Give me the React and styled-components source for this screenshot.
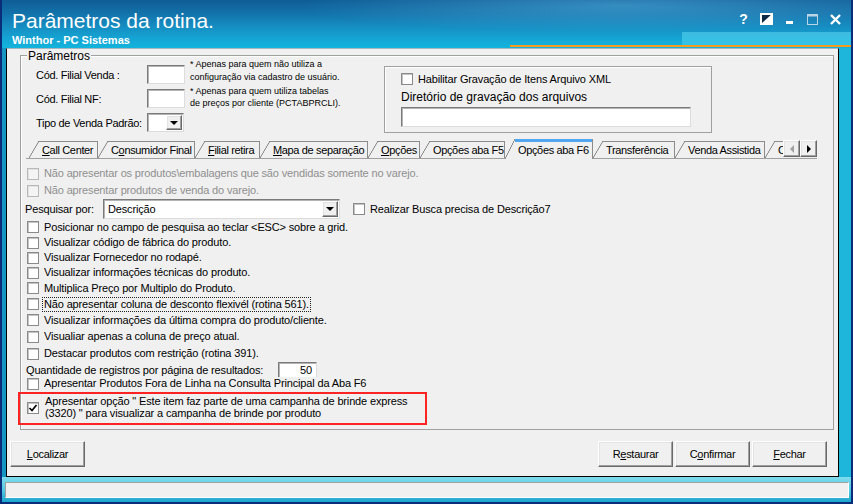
import React from 'react'
import styled, { createGlobalStyle, css } from 'styled-components'

const GlobalStyle = createGlobalStyle`
  * { box-sizing: border-box; }
  html, body { margin: 0; padding: 0; background: #ffffff; }
  body {
    font-family: "Liberation Sans", Arial, sans-serif;
    font-size: 11px;
    letter-spacing: -0.15px;
    color: #000;
  }
`

const sunken = css`
  background: #fff;
  border: 1px solid;
  border-color: #7a7a7a #dcdcdc #dcdcdc #7a7a7a;
  box-shadow: inset 1px 1px 0 #b4b4b4;
`

const raised = css`
  background: #f0f0f0;
  border: 1px solid;
  border-color: #ffffff #696969 #696969 #ffffff;
  box-shadow: inset -1px -1px 0 #a0a0a0, inset 1px 1px 0 #e3e3e3;
`

const Window = styled.div`
  width: 853px;
  height: 504px;
  display: flex;
  flex-direction: column;
  border: 2px solid #0a2d7a;
  border-top: 0;
  background: linear-gradient(90deg, #1596c2 0%, #1aa9d2 50%, #1fb6dc 100%);
  overflow: hidden;
`

const TitleBar = styled.div`
  flex: none;
  height: 48px;
  display: flex;
  justify-content: space-between;
  padding: 10px 4px 0 10px;
  color: #fff;
  background:
    linear-gradient(#f39c1f, #f39c1f) 508px 45px / 345px 2px no-repeat,
    linear-gradient(180deg, rgba(95, 215, 240, 0.55), rgba(60, 200, 235, 0.75)) 680px 32px / 175px 13px no-repeat,
    radial-gradient(ellipse 320px 26px at 620px 6px, rgba(90, 180, 225, 0.5), rgba(90, 180, 225, 0)),
    linear-gradient(180deg, #0f5c96 0%, #1372aa 28%, #1690c4 58%, #14a8d6 84%, #12b4dc 100%);
`

const TitleText = styled.div`
  display: flex;
  flex-direction: column;
  letter-spacing: 0;
`

const Title = styled.div`
  font-size: 21px;
  line-height: 21px;
`

const Subtitle = styled.div`
  margin-top: 3px;
  font-size: 11px;
  line-height: 12px;
  font-weight: bold;
`

const Controls = styled.div`
  display: flex;
  height: 18px;
`

const Ctrl = styled.span`
  width: 23px;
  height: 18px;
  display: flex;
  align-items: center;
  justify-content: center;
  font: bold 14px "Liberation Sans", Arial, sans-serif;
  color: #fff;
`

const ClientRow = styled.div`
  flex: 1;
  display: flex;
  padding: 0 12px 0 4px;
`

const Client = styled.div`
  flex: 1;
  display: flex;
  flex-direction: column;
  background: #f0f0f0;
  border: 1px solid #000;
  border-top-color: #a9b8c0;
`

const GroupBox = styled.div`
  position: relative;
  flex: none;
  margin: 6px 4px 0 13px;
  height: 375px;
  border: 1px solid #a0a0a0;
  box-shadow: inset 1px 1px 0 #fff;
`

const Legend = styled.span`
  position: absolute;
  top: -7px;
  left: 6px;
  padding: 0 1px;
  background: #f0f0f0;
  font-size: 12px;
  line-height: 14px;
  letter-spacing: 0;
`

const TopSection = styled.div`
  display: flex;
  padding-top: 9px;
`

const Fields = styled.div`
  width: 363px;
  display: flex;
  flex-direction: column;
  gap: 5px;
  padding-left: 15px;
`

const FieldRow = styled.div`
  display: flex;
  align-items: center;
  height: 19px;
`

const FieldLabel = styled.span`
  width: 111px;
  flex: none;
  white-space: nowrap;
  letter-spacing: -0.3px;
`

const TextBox = styled.div`
  ${sunken};
  width: ${p => p.$w}px;
  height: ${p => p.$h || 19}px;
  flex: none;
  display: flex;
  align-items: center;
  justify-content: ${p => (p.$right ? 'flex-end' : 'flex-start')};
  padding: 0 4px;
  ${p => p.$open && 'border-bottom: 0;'}
`

const Note = styled.span`
  margin-left: 5px;
  margin-top: ${p => p.$shift}px;
  font-size: 9px;
  line-height: ${p => p.$lh}px;
  letter-spacing: 0;
`

const Combo = styled.div`
  ${sunken};
  width: ${p => p.$w}px;
  height: ${p => p.$h}px;
  flex: none;
  display: flex;
  align-items: stretch;
  padding: 1px;
`

const ComboText = styled.span`
  flex: 1;
  display: flex;
  align-items: center;
  padding-left: 3px;
`

const DropButton = styled.span`
  ${raised};
  width: 16px;
  flex: none;
  display: flex;
  align-items: center;
  justify-content: center;

  &::after {
    content: '';
    border-left: 4px solid transparent;
    border-right: 4px solid transparent;
    border-top: 4px solid #000;
  }
`

const InnerGroup = styled.div`
  width: 328px;
  height: 67px;
  margin-top: 1px;
  border: 1px solid #a0a0a0;
  box-shadow: inset 1px 1px 0 #fff;
  padding: 6px 0 0 16px;
  display: flex;
  flex-direction: column;
`

const DirLabel = styled.div`
  margin-top: 5px;
  font-size: 12px;
  line-height: 14px;
  letter-spacing: 0;
`

const DirInput = styled.div`
  ${sunken};
  margin-top: 3px;
  width: 290px;
  height: 20px;
`

const TabStrip = styled.div`
  display: flex;
  height: 20px;
  width: 791px;
  margin: 6px 0 0 5px;
  padding-left: 3px;
  background: linear-gradient(#a0a0a0, #a0a0a0) left bottom / 100% 1px no-repeat;
`

const TabList = styled.div`
  flex: 1;
  display: flex;
  align-items: flex-end;
  overflow: hidden;
`

const tabLine = '#8c8c8c'

const Tab = styled.div`
  flex: none;
  width: ${p => p.$w}px;
  height: ${p => (p.$active ? 20 : 17)}px;
  margin-bottom: ${p => (p.$active ? 0 : 1)}px;
  padding: ${p => (p.$active ? 5 : 3)}px 0 0 13px;
  line-height: 13px;
  letter-spacing: -0.35px;
  white-space: nowrap;
  overflow: hidden;
  border-right: 1px solid ${tabLine};
  background:
    ${p => (p.$active ? 'linear-gradient(#52a6f0, #52a6f0) 10px 0 / calc(100% - 10px) 3px no-repeat,' : '')}
    linear-gradient(${tabLine}, ${tabLine}) 10px 0 / calc(100% - 10px) 1px no-repeat,
    linear-gradient(to bottom right, transparent calc(50% - 0.7px), ${tabLine} calc(50% - 0.2px),
      ${tabLine} calc(50% + 0.2px), transparent calc(50% + 0.7px)) 0 0 / 10px 100% no-repeat,
    #f0f0f0;
`

const ArrowGroup = styled.div`
  display: flex;
  margin-top: 1px;
  height: 17px;
`

const ArrowButton = styled.span`
  ${raised};
  width: 17px;
  height: 17px;
  display: flex;
  align-items: center;
  justify-content: center;

  &::after {
    content: '';
    border-top: 4px solid transparent;
    border-bottom: 4px solid transparent;
    ${p => (p.$dir === 'left'
      ? 'border-right: 4px solid #a0a0a0;'
      : 'border-left: 4px solid #000;')}
  }
`

const TabPage = styled.div`
  display: flex;
  flex-direction: column;
  padding: 6px 0 0 6px;
`

const Row = styled.div`
  display: flex;
  align-items: center;
  height: ${p => p.$h}px;
  margin-left: ${p => p.$indent || 0}px;
  color: ${p => (p.$disabled ? '#8f8f8f' : '#000')};
  white-space: nowrap;
`

const Box = styled.span`
  width: 12px;
  height: 12px;
  flex: none;
  display: inline-flex;
  align-items: center;
  justify-content: center;
  margin-top: ${p => p.$top || 0}px;
  border: 1px solid ${p => (p.$disabled ? '#b8b8b8' : '#8a8a8a')};
  background: ${p => (p.$disabled ? '#f4f4f4' : '#fff')};
  box-shadow: inset 1px 1px 0 ${p => (p.$disabled ? '#e2e2e2' : '#c4c4c4')};
`

const CheckLabel = styled.span`
  margin-left: 5px;
  line-height: 13px;
`

const Focus = styled.span`
  margin-left: 4px;
  padding: 0 1px;
  line-height: 13px;
  outline: 1px dotted #222;
`

const SearchLabel = styled.span`
  width: 78px;
  flex: none;
`

const QtyLabel = styled.span`
  width: 252px;
  flex: none;
`

const Highlight = styled.div`
  display: flex;
  align-items: flex-start;
  width: 409px;
  height: 33px;
  margin: 2px 0 0 -9px;
  padding: 1px 0 0 7px;
  border: 2px solid #ff2424;
`

const HighlightText = styled.span`
  margin-left: 6px;
  line-height: 12px;
`

const ButtonBar = styled.div`
  display: flex;
  gap: 2px;
  margin-top: 11px;
  padding: 0 11px 0 3px;
`

const PushButton = styled.button`
  ${raised};
  width: 75px;
  height: 26px;
  padding: 0;
  margin-right: ${p => (p.$push ? 'auto' : '0')};
  font: 11px "Liberation Sans", Arial, sans-serif;
  letter-spacing: -0.3px;
  color: #000;
`

const StatusArea = styled.div`
  flex: none;
  height: 25px;
  display: flex;
  padding: 5px 2px 4px 3px;
  background: linear-gradient(180deg, #7fdcec 0%, #52c8e4 55%, #1ba4cc 100%);
`

const StatusBox = styled.div`
  flex: 1;
  background: #f0f0f0;
  border: 1px solid;
  border-color: #a0a0a0 #ffffff #ffffff #a0a0a0;
`

const Accel = ({ text, at }) =>
  at == null ? text : (
    <>
      {text.slice(0, at)}
      <u>{text[at]}</u>
      {text.slice(at + 1)}
    </>
  )

const Tick = () => (
  <svg width="10" height="10" viewBox="0 0 10 10">
    <path d="M1.5 5 L4 7.5 L8.5 2" fill="none" stroke="#000" strokeWidth="1.7" />
  </svg>
)

const Check = ({ checked, disabled, top }) => (
  <Box $disabled={disabled} $top={top}>
    {checked && <Tick />}
  </Box>
)

const tabs = [
  { label: 'Call Center', at: 0, w: 69 },
  { label: 'Consumidor Final', at: 1, w: 97 },
  { label: 'Filial retira', at: 0, w: 65 },
  { label: 'Mapa de separação', at: 0, w: 108 },
  { label: 'Opções', at: 0, w: 52 },
  { label: 'Opções aba F5', w: 85 },
  { label: 'Opções aba F6', w: 88, active: true },
  { label: 'Transferência', w: 82 },
  { label: 'Venda Assistida', w: 90 },
  { label: 'Cotação', w: 60 },
]

const options = [
  ['Posicionar no campo de pesquisa ao teclar <ESC> sobre a grid.', 16],
  ['Visualizar código de fábrica do produto.', 15],
  ['Visualizar Fornecedor no rodapé.', 15],
  ['Visualizar informações técnicas do produto.', 15],
  ['Multiplica Preço por Multiplo do Produto.', 16],
  ['Não apresentar coluna de desconto flexivél (rotina 561).', 16, true],
  ['Visualizar informações da última compra do produto/cliente.', 16],
  ['Visualiar apenas a coluna de preço atual.', 17],
  ['Destacar produtos com restrição (rotina 391).', 17],
]

export default function App() {
  return (
    <>
      <GlobalStyle />
      <Window>
        <TitleBar>
          <TitleText>
            <Title>Parâmetros da rotina.</Title>
            <Subtitle>Winthor - PC Sistemas</Subtitle>
          </TitleText>
          <Controls>
            <Ctrl>?</Ctrl>
            <Ctrl>
              <svg width="13" height="12" viewBox="0 0 13 12">
                <rect x="1" y="1" width="11" height="10" fill="#0d2a48" stroke="#fff" strokeWidth="2" />
                <path d="M1 11 L12 1 L12 11 Z" fill="#fff" />
              </svg>
            </Ctrl>
            <Ctrl>
              <svg width="8" height="12" viewBox="0 0 8 12">
                <rect x="0" y="8" width="7" height="3" fill="#fff" />
              </svg>
            </Ctrl>
            <Ctrl>
              <svg width="11" height="11" viewBox="0 0 11 11">
                <rect x="0.5" y="0.5" width="10" height="10" fill="none" stroke="#b9d4e2" />
                <rect x="0.5" y="0.5" width="10" height="2" fill="#b9d4e2" />
              </svg>
            </Ctrl>
            <Ctrl>
              <svg width="11" height="11" viewBox="0 0 11 11">
                <path d="M1 1 L10 10 M10 1 L1 10" stroke="#fff" strokeWidth="2.4" />
              </svg>
            </Ctrl>
          </Controls>
        </TitleBar>

        <ClientRow>
          <Client>
            <GroupBox>
              <Legend>Parâmetros</Legend>
              <TopSection>
                <Fields>
                  <FieldRow>
                    <FieldLabel>Cód. Filial Venda :</FieldLabel>
                    <TextBox $w={38} />
                    <Note $lh={13} $shift={-8}>
                      * Apenas para quem não utiliza a<br />
                      configuração via cadastro de usuário.
                    </Note>
                  </FieldRow>
                  <FieldRow>
                    <FieldLabel>Cód. Filial NF:</FieldLabel>
                    <TextBox $w={38} />
                    <Note $lh={12} $shift={-3}>
                      * Apenas para quem utiliza tabelas<br />
                      de preços por cliente (PCTABPRCLI).
                    </Note>
                  </FieldRow>
                  <FieldRow>
                    <FieldLabel>Tipo de Venda Padrão:</FieldLabel>
                    <Combo $w={37} $h={19}>
                      <ComboText />
                      <DropButton />
                    </Combo>
                  </FieldRow>
                </Fields>
                <InnerGroup>
                  <Row $h={12}>
                    <Check />
                    <CheckLabel>Habilitar Gravação de Itens Arquivo XML</CheckLabel>
                  </Row>
                  <DirLabel>Diretório de gravação dos arquivos</DirLabel>
                  <DirInput />
                </InnerGroup>
              </TopSection>

              <TabStrip>
                <TabList>
                  {tabs.map(t => (
                    <Tab key={t.label} $w={t.w} $active={t.active}>
                      <Accel text={t.label} at={t.at} />
                    </Tab>
                  ))}
                </TabList>
                <ArrowGroup>
                  <ArrowButton $dir="left" />
                  <ArrowButton $dir="right" />
                </ArrowGroup>
              </TabStrip>

              <TabPage>
                <Row $h={17} $disabled>
                  <Check disabled />
                  <CheckLabel>Não apresentar os produtos\embalagens que são vendidas somente no varejo.</CheckLabel>
                </Row>
                <Row $h={17} $disabled>
                  <Check disabled />
                  <CheckLabel>Não apresentar produtos de venda do varejo.</CheckLabel>
                </Row>
                <Row $h={20} $indent={-2}>
                  <SearchLabel>Pesquisar por:</SearchLabel>
                  <Combo $w={237} $h={20}>
                    <ComboText>Descrição</ComboText>
                    <DropButton />
                  </Combo>
                  <Row $h={20} $indent={13}>
                    <Check />
                    <CheckLabel>Realizar Busca precisa de Descrição7</CheckLabel>
                  </Row>
                </Row>
                {options.map(([text, h, focus]) => (
                  <Row key={text} $h={h}>
                    <Check />
                    {focus ? <Focus>{text}</Focus> : <CheckLabel>{text}</CheckLabel>}
                  </Row>
                ))}
                <Row $h={15} $indent={-1}>
                  <QtyLabel>Quantidade de registros por página de resultados:</QtyLabel>
                  <TextBox $w={39} $h={15} $right $open>50</TextBox>
                </Row>
                <Row $h={13}>
                  <Check />
                  <CheckLabel>Apresentar Produtos Fora de Linha na Consulta Principal da Aba F6</CheckLabel>
                </Row>
                <Highlight>
                  <Check checked top={7} />
                  <HighlightText>
                    Apresentar opção " Este item faz parte de uma campanha de brinde express<br />
                    (3320) " para visualizar a campanha de brinde por produto
                  </HighlightText>
                </Highlight>
              </TabPage>
            </GroupBox>

            <ButtonBar>
              <PushButton $push><Accel text="Localizar" at={0} /></PushButton>
              <PushButton><Accel text="Restaurar" at={1} /></PushButton>
              <PushButton><Accel text="Confirmar" at={1} /></PushButton>
              <PushButton><Accel text="Fechar" at={0} /></PushButton>
            </ButtonBar>
          </Client>
        </ClientRow>

        <StatusArea>
          <StatusBox />
        </StatusArea>
      </Window>
    </>
  )
}
